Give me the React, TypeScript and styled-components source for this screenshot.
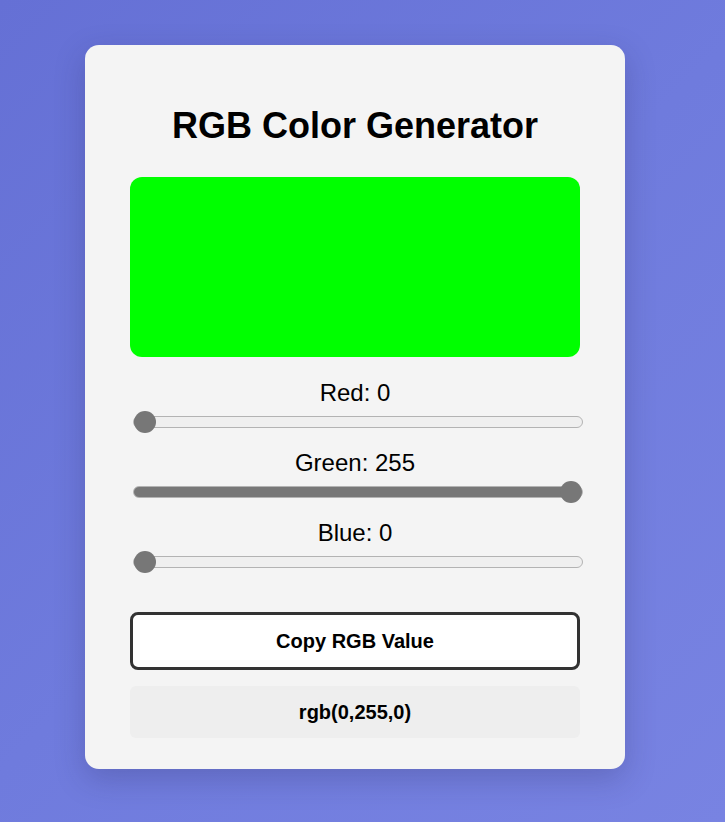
import React, { useState } from "react";
import styled, { createGlobalStyle } from "styled-components";

const GlobalStyle = createGlobalStyle`
  html, body {
    margin: 0;
    padding: 0;
  }
  body {
    font-family: "Liberation Sans", Arial, sans-serif;
    background: linear-gradient(135deg, #6570d5 0%, #6f7bdd 50%, #7883e2 100%);
    min-height: 100vh;
  }
`;

const Page = styled.div`
  display: flex;
  justify-content: center;
  align-items: flex-start;
  min-height: 822px;
  box-sizing: border-box;
  padding: 45px 15px 0 0;
`;

const Card = styled.div`
  width: 540px;
  box-sizing: border-box;
  padding: 60px 45px 31px;
  background: #f4f4f4;
  border-radius: 14px;
  box-shadow: 0 10px 30px rgba(40, 40, 90, 0.25);
  display: flex;
  flex-direction: column;
`;

const Title = styled.h1`
  margin: 0 0 30px;
  font-size: 36px;
  line-height: 42px;
  font-weight: 700;
  text-align: center;
  color: #000;
`;

const Swatch = styled.div<{ $color: string }>`
  height: 180px;
  border-radius: 12px;
  background: ${(p) => p.$color};
`;

const Sliders = styled.div`
  margin-top: 22px;
  display: flex;
  flex-direction: column;
  gap: 16px;
`;

const Group = styled.div`
  display: flex;
  flex-direction: column;
`;

const Label = styled.label`
  display: block;
  text-align: center;
  font-size: 24px;
  line-height: 28px;
  margin-bottom: 4px;
  color: #000;
`;

const Range = styled.input`
  -webkit-appearance: none;
  appearance: none;
  width: 450px;
  height: 22px;
  margin: 0 0 0 3px;
  padding: 0;
  background: transparent;
  display: block;

  &::-webkit-slider-runnable-track {
    height: 12px;
    box-sizing: border-box;
    border-radius: 6px;
    border: 1px solid #b3b3b3;
    background: linear-gradient(
      to right,
      #777 0%,
      #777 var(--fill),
      #efefef var(--fill),
      #efefef 100%
    );
  }

  &::-webkit-slider-thumb {
    -webkit-appearance: none;
    appearance: none;
    width: 22px;
    height: 22px;
    border-radius: 50%;
    background: #777;
    border: none;
    margin-top: -6px;
  }
`;

const CopyButton = styled.button`
  margin-top: 39px;
  height: 58px;
  width: 100%;
  background: #fff;
  border: 3px solid #333;
  border-radius: 8px;
  font-family: "Liberation Sans", Arial, sans-serif;
  font-size: 20px;
  font-weight: 700;
  color: #000;
  cursor: pointer;
`;

const Output = styled.div`
  margin-top: 16px;
  height: 52px;
  display: flex;
  align-items: center;
  justify-content: center;
  background: #eeeeee;
  border-radius: 6px;
  font-size: 20px;
  font-weight: 700;
  color: #000;
`;

type Channel = { key: "r" | "g" | "b"; name: string };

const channels: Channel[] = [
  { key: "r", name: "Red" },
  { key: "g", name: "Green" },
  { key: "b", name: "Blue" },
];

export default function App() {
  const [rgb, setRgb] = useState({ r: 0, g: 255, b: 0 });
  const value = `rgb(${rgb.r},${rgb.g},${rgb.b})`;

  return (
    <>
      <GlobalStyle />
      <Page>
        <Card>
          <Title>RGB Color Generator</Title>
          <Swatch $color={value} />
          <Sliders>
            {channels.map((c) => {
              const v = rgb[c.key];
              // fill up to the thumb centre
              const fill = `calc(11px + (100% - 22px) * ${v / 255})`;
              return (
                <Group key={c.key}>
                  <Label htmlFor={c.key}>
                    {c.name}: {v}
                  </Label>
                  <Range
                    id={c.key}
                    type="range"
                    min={0}
                    max={255}
                    value={v}
                    style={{ ["--fill" as any]: fill }}
                    onChange={(e) =>
                      setRgb({ ...rgb, [c.key]: Number(e.target.value) })
                    }
                  />
                </Group>
              );
            })}
          </Sliders>
          <CopyButton onClick={() => navigator.clipboard?.writeText(value)}>
            Copy RGB Value
          </CopyButton>
          <Output>{value}</Output>
        </Card>
      </Page>
    </>
  );
}
